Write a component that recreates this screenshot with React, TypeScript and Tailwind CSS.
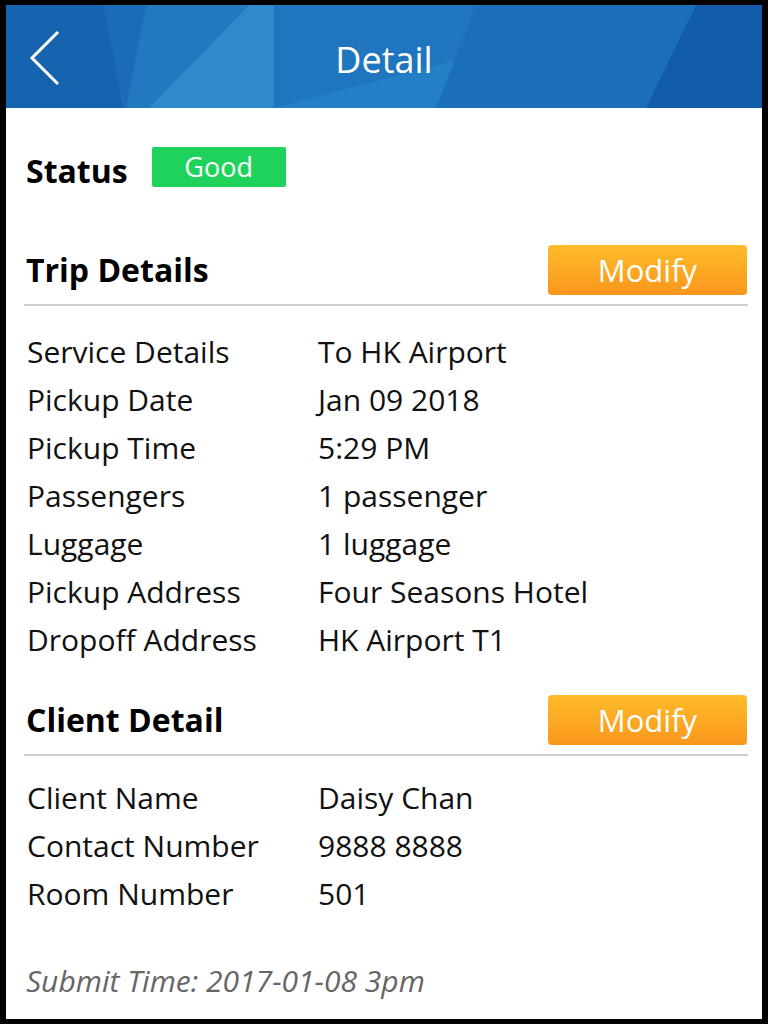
import React from 'react';

const font = { fontFamily: '"Open Sans", "Noto Sans", sans-serif' };

const trip = [
  ['Service Details', 'To HK Airport'],
  ['Pickup Date', 'Jan 09 2018'],
  ['Pickup Time', '5:29 PM'],
  ['Passengers', '1 passenger'],
  ['Luggage', '1 luggage'],
  ['Pickup Address', 'Four Seasons Hotel'],
  ['Dropoff Address', 'HK Airport T1'],
];

const client = [
  ['Client Name', 'Daisy Chan'],
  ['Contact Number', '9888 8888'],
  ['Room Number', '501'],
];

function HeaderBg() {
  return (
    <svg className="absolute inset-0 h-full w-full" viewBox="0 0 756 103" preserveAspectRatio="none">
      <rect width="756" height="103" fill="#1a6cb6" />
      <polygon points="0,0 97,0 117,103 0,103" fill="#1664b0" />
      <polygon points="140,0 243,0 143,103 120,103" fill="#2379c0" />
      <polygon points="243,0 268,0 268,103 143,103" fill="#3089cb" />
      <polygon points="268,0 470,0 470,103 268,103" fill="#1f76bf" />
      <polygon points="268,103 470,50 470,103" fill="#2480c6" />
      <polygon points="470,0 756,0 756,103 430,103" fill="#1a6fb8" />
      <polygon points="690,0 756,0 756,103 640,103" fill="#125ba8" />
    </svg>
  );
}

function Row({ label, value }: { label: string; value: string }) {
  return (
    <div className="flex h-[48px] items-center text-[30px] text-[#111]">
      <div className="w-[291px] shrink-0">{label}</div>
      <div>{value}</div>
    </div>
  );
}

function Section({ title }: { title: string }) {
  return (
    <div className="flex items-center justify-between border-b-2 border-[#cfcfcf] pb-[9px]">
      <div className="pl-[2px] text-[32px] font-bold text-black">{title}</div>
      <button className="mr-[1px] h-[50px] w-[199px] rounded-[4px] bg-gradient-to-b from-[#ffbc2a] to-[#f9961c] text-[31px] text-white">
        Modify
      </button>
    </div>
  );
}

export default function App() {
  return (
    <div className="h-[1024px] w-[768px] bg-black pb-[5px] pl-[6px] pr-[6px] pt-[5px]" style={font}>
      <div className="flex h-full flex-col bg-white">
        <div className="relative flex h-[103px] shrink-0 items-center justify-center overflow-hidden">
          <HeaderBg />
          <svg className="absolute left-[22px] top-[24px]" width="36" height="58" viewBox="0 0 36 58">
            <polyline points="30,3 4,29 30,55" fill="none" stroke="white" strokeWidth="3" />
          </svg>
          <div className="relative mt-[6px] text-[36px] text-white">Detail</div>
        </div>

        <div className="flex flex-col pl-[18px] pr-[14px]">
          <div className="mt-[39px] flex items-start pl-[2px]">
            <div className="mt-[4px] text-[32px] font-bold leading-[40px] text-black">Status</div>
            <div className="ml-[24px] flex h-[40px] w-[134px] items-center justify-center rounded-[2px] bg-[#1fd25c] text-[27px] text-white">
              Good
            </div>
          </div>

          <div className="mt-[54px]">
            <Section title="Trip Details" />
          </div>
          <div className="mt-[21px] flex flex-col pl-[3px]">
            {trip.map(([l, v]) => (
              <Row key={l} label={l} value={v} />
            ))}
          </div>

          <div className="mt-[32px]">
            <Section title="Client Detail" />
          </div>
          <div className="mt-[17px] flex flex-col pl-[3px]">
            {client.map(([l, v]) => (
              <Row key={l} label={l} value={v} />
            ))}
          </div>

          <div className="mt-[41px] pl-[2px] text-[30px] italic text-[#666]">Submit Time: 2017-01-08 3pm</div>
        </div>
      </div>
    </div>
  );
}
